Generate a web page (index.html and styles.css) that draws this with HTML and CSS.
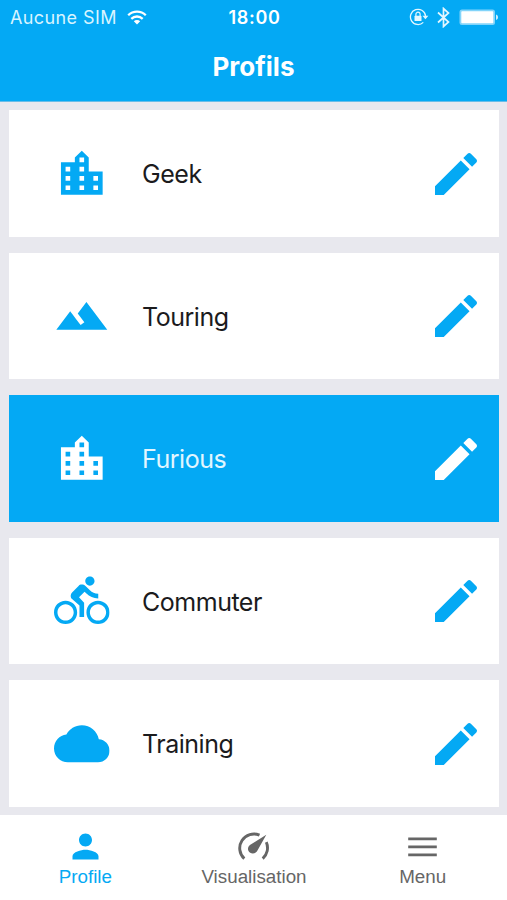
FILE: index.html
```html
<!DOCTYPE html>
<html lang="fr">
<head>
<meta charset="utf-8">
<title>Profils</title>
<link rel="stylesheet" href="styles.css">
</head>
<body>
<svg class="defs" aria-hidden="true">
  <symbol id="city" viewBox="0 0 24 24"><path d="M15 11V5l-3-3-3 3v2H3v14h18V11h-6zm-8 8H5v-2h2v2zm0-4H5v-2h2v2zm0-4H5V9h2v2zm6 8h-2v-2h2v2zm0-4h-2v-2h2v2zm0-4h-2V9h2v2zm0-4h-2V5h2v2zm6 12h-2v-2h2v2zm0-4h-2v-2h2v2z"/></symbol>
  <symbol id="terrain" viewBox="0 0 24 24"><path d="M14 6l-3.75 5 2.85 3.8-1.6 1.2C9.81 13.75 7 10 7 10l-6 8h22L14 6z"/></symbol>
  <symbol id="bike" viewBox="0 0 24 24"><path d="M15.500 5.500c1.100 0 2-.9 2-2s-.9-2-2-2-2 .9-2 2 .9 2 2 2zM5 12c-2.800 0-5 2.200-5 5s2.200 5 5 5 5-2.200 5-5-2.200-5-5-5zm0 8.500c-1.900 0-3.500-1.600-3.500-3.500s1.600-3.500 3.500-3.500 3.500 1.600 3.500 3.500-1.600 3.500-3.500 3.500zm5.800-10l2.400-2.400.8.8c1.300 1.300 3 2.100 5.100 2.100V9c-1.500 0-2.700-.6-3.600-1.500l-1.900-1.900c-.5-.4-1-.6-1.600-.6s-1.100.2-1.400.6L7.800 8.400c-.4.4-.6.9-.6 1.400 0 .6.200 1.100.6 1.400L11 14v5h2v-6.200l-2.200-2.300zM19 12c-2.800 0-5 2.200-5 5s2.200 5 5 5 5-2.200 5-5-2.200-5-5-5zm0 8.500c-1.900 0-3.500-1.600-3.500-3.500s1.600-3.500 3.500-3.500 3.500 1.600 3.500 3.500-1.600 3.500-3.500 3.500z"/></symbol>
  <symbol id="cloud" viewBox="0 0 24 24"><path d="M19.350 10.040C18.670 6.590 15.640 4 12 4 9.110 4 6.600 5.640 5.350 8.040 2.340 8.360 0 10.910 0 14c0 3.310 2.690 6 6 6h13c2.760 0 5-2.240 5-5 0-2.640-2.050-4.780-4.650-4.960z"/></symbol>
  <symbol id="pencil" viewBox="0 0 24 24"><path d="M3 17.250V21h3.750L17.810 9.940l-3.750-3.750L3 17.250zM20.710 7.040c.39-.39.39-1.020 0-1.410l-2.340-2.340c-.39-.39-1.020-.39-1.410 0l-1.830 1.830 3.750 3.750 1.830-1.830z"/></symbol>
</svg>
<div class="app">
  <header class="header">
    <div class="status">
      <div class="carrier">
        <span class="carrier-name">Aucune SIM</span>
        <svg class="wifi" viewBox="0 0 20 15"><g fill="none" stroke="currentColor" stroke-width="2.300"><path d="M1.200 5.300a12.600 12.600 0 0 1 17.600 0"/><path d="M4.300 8.800a8.200 8.200 0 0 1 11.400 0"/></g><path d="M10 14.500l-3.200-3.300a4.600 4.600 0 0 1 6.400 0z" fill="currentColor"/></svg>
      </div>
      <span class="clock">18:00</span>
      <div class="indicators">
        <svg class="lock" viewBox="0 0 20 18"><path d="M14.300 14.400A7.600 7.600 0 1 1 16.600 8.200" fill="none" stroke="currentColor" stroke-width="1.300"/><path d="M13.400 7.800h6l-3 3.400z" fill="currentColor"/><rect x="5.500" y="7.800" width="7" height="5.200" rx=".6" fill="currentColor"/><path d="M6.900 8V6.300a2.100 2.100 0 0 1 4.200 0V8" fill="none" stroke="currentColor" stroke-width="1.200"/></svg>
        <svg class="bluetooth" viewBox="0 0 13 21"><path d="M1 5.500l10.500 9.500-5 4.500v-18l5 4.500L1 15.500" fill="none" stroke="currentColor" stroke-width="1.700"/></svg>
        <svg class="battery" viewBox="0 0 40 17"><rect x=".5" y=".5" width="35.500" height="15.500" rx="2.500" fill="currentColor" opacity=".5"/><rect x="2.300" y="2.300" width="32" height="12" rx=".8" fill="currentColor"/><path d="M37 5.500c1.300.4 2 1.400 2 2.800s-.7 2.300-2 2.700z" fill="currentColor" opacity=".8"/></svg>
      </div>
    </div>
    <h1 class="title">Profils</h1>
  </header>
  <main class="list">
    <article class="card"><svg class="kind"><use href="#city"/></svg><span class="name">Geek</span><svg class="edit"><use href="#pencil"/></svg></article>
    <article class="card"><svg class="kind"><use href="#terrain"/></svg><span class="name">Touring</span><svg class="edit"><use href="#pencil"/></svg></article>
    <article class="card selected"><svg class="kind"><use href="#city"/></svg><span class="name">Furious</span><svg class="edit"><use href="#pencil"/></svg></article>
    <article class="card"><svg class="kind"><use href="#bike"/></svg><span class="name">Commuter</span><svg class="edit"><use href="#pencil"/></svg></article>
    <article class="card"><svg class="kind"><use href="#cloud"/></svg><span class="name">Training</span><svg class="edit"><use href="#pencil"/></svg></article>
  </main>
  <nav class="tabs">
    <a class="tab active"><svg class="tab-icon" viewBox="0 0 24 24"><path d="M12 12c2.210 0 4-1.790 4-4s-1.790-4-4-4-4 1.790-4 4 1.790 4 4 4zm0 2c-2.670 0-8 1.340-8 4v2h16v-2c0-2.660-5.330-4-8-4z"/></svg><span>Profile</span></a>
    <a class="tab"><svg class="tab-icon" viewBox="0 0 39 39"><path d="M10.300 31.600A14.200 14.200 0 0 1 25.500 8.100M32.300 15.200A14.200 14.200 0 0 1 28.700 31.600" fill="none" stroke="currentColor" stroke-width="2.900"/><path d="M32.300 7.800L23.600 23.200c-1.700 3.200-4.900 4.200-7.400 2.600-2.900-1.900-2.900-5.500-.3-7.800z"/></svg><span>Visualisation</span></a>
    <a class="tab"><svg class="tab-icon" viewBox="0 0 39 39"><path d="M5.200 10.400h28.600v2.800H5.200zM5.200 18.400h28.600v2.800H5.200zM5.200 26.400h28.600v2.800H5.200z"/></svg><span>Menu</span></a>
  </nav>
</div>
</body>
</html>
```
FILE: styles.css
```css
* { box-sizing: border-box; }
body {
  margin: 0;
  background: #e8e8ee;
  font-family: Inter, "Liberation Sans", sans-serif;
}
.defs { display: none; }
svg { display: block; flex: none; fill: currentColor; }
.app {
  width: 507px;
  height: 900px;
  display: flex;
  flex-direction: column;
  overflow: hidden;
}
.header {
  height: 102px;
  flex: none;
  background: #04a9f4;
  color: #fff;
  border-bottom: 1px solid #69bde8;
}
.status {
  height: 34px;
  display: grid;
  grid-template-columns: 1fr auto 1fr;
  align-items: center;
  padding: 0 8px 0 10px;
  font-size: 17.500px;
}
.carrier { display: flex; align-items: center; gap: 10px; color: #d8f4ff; }
.carrier-name { font-size: 18px; letter-spacing: .4px; }
.wifi { width: 20px; height: 15px; color: #fff; }
.clock { font-weight: 600; font-size: 18px; letter-spacing: .7px; }
.indicators { display: flex; align-items: center; justify-content: flex-end; color: #e4f7ff; }
.lock { width: 20px; height: 18px; margin-right: 8px; }
.bluetooth { width: 13px; height: 21px; margin-right: 9px; }
.battery { width: 40px; height: 17px; color: #fff; }
.title {
  margin: 0;
  height: 67px;
  line-height: 66px;
  text-align: center;
  font-size: 26px;
  font-weight: 700;
}
.list {
  height: 712.500px;
  flex: none;
  padding: 8px 8px 0 9px;
  display: flex;
  flex-direction: column;
  gap: 16px;
}
.card {
  height: 126.500px;
  flex: none;
  display: flex;
  align-items: center;
  padding: 1px 15.500px 0 45px;
  background: #fff;
  color: #04a9f4;
}
.selected { background: #04a9f4; color: #fff; }
.kind { width: 55.600px; height: 55.600px; }
.name {
  flex: 1;
  margin-left: 32.500px;
  padding-top: 1px;
  font-size: 25px;
  line-height: 32px;
  letter-spacing: -.5px;
  color: #1b1b1d;
}
.selected .name { color: #e2f6ff; }
.edit { width: 56px; height: 56px; }
.tabs {
  flex: 1;
  display: grid;
  grid-template-columns: repeat(3, 1fr);
  padding-left: 1px;
  background: #fff;
  color: #666;
  font: 18.800px/22px "Liberation Sans", Arial, sans-serif;
}
.tab { display: flex; flex-direction: column; align-items: center; padding-top: 12px; }
.tab-icon { width: 39px; height: 39px; }
.active { color: #04a9f4; }
```
